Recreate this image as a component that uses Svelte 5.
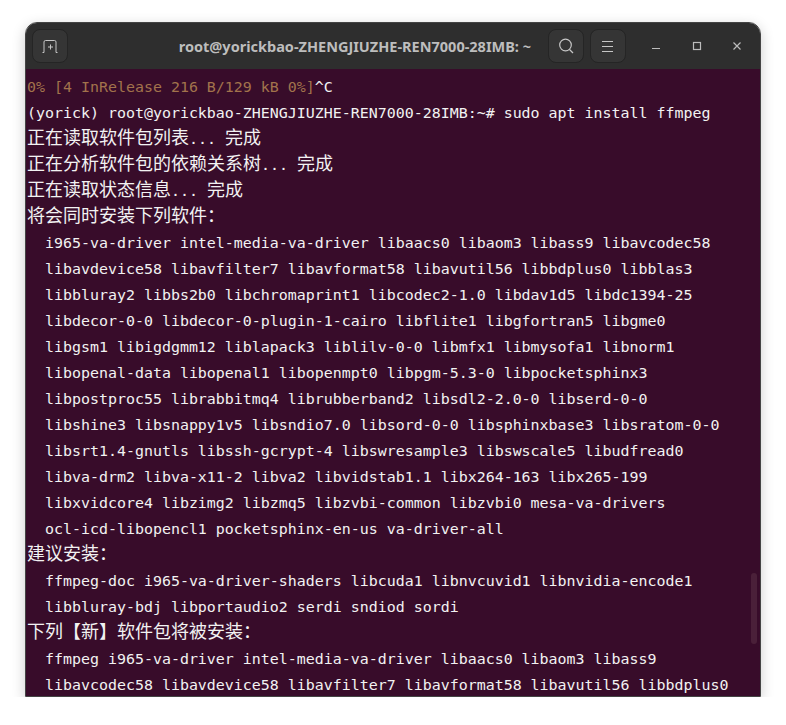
<script>
	const lines = [
		{ text: '0% [4 InRelease 216 B/129 kB 0%]', dim: true, rest: '^C' },
		{ text: '(yorick) root@yorickbao-ZHENGJIUZHE-REN7000-28IMB:~# sudo apt install ffmpeg' },
		{ text: '正在读取软件包列表... 完成' },
		{ text: '正在分析软件包的依赖关系树... 完成' },
		{ text: '正在读取状态信息... 完成' },
		{ text: '将会同时安装下列软件：' },
		{ text: '  i965-va-driver intel-media-va-driver libaacs0 libaom3 libass9 libavcodec58' },
		{ text: '  libavdevice58 libavfilter7 libavformat58 libavutil56 libbdplus0 libblas3' },
		{ text: '  libbluray2 libbs2b0 libchromaprint1 libcodec2-1.0 libdav1d5 libdc1394-25' },
		{ text: '  libdecor-0-0 libdecor-0-plugin-1-cairo libflite1 libgfortran5 libgme0' },
		{ text: '  libgsm1 libigdgmm12 liblapack3 liblilv-0-0 libmfx1 libmysofa1 libnorm1' },
		{ text: '  libopenal-data libopenal1 libopenmpt0 libpgm-5.3-0 libpocketsphinx3' },
		{ text: '  libpostproc55 librabbitmq4 librubberband2 libsdl2-2.0-0 libserd-0-0' },
		{ text: '  libshine3 libsnappy1v5 libsndio7.0 libsord-0-0 libsphinxbase3 libsratom-0-0' },
		{ text: '  libsrt1.4-gnutls libssh-gcrypt-4 libswresample3 libswscale5 libudfread0' },
		{ text: '  libva-drm2 libva-x11-2 libva2 libvidstab1.1 libx264-163 libx265-199' },
		{ text: '  libxvidcore4 libzimg2 libzmq5 libzvbi-common libzvbi0 mesa-va-drivers' },
		{ text: '  ocl-icd-libopencl1 pocketsphinx-en-us va-driver-all' },
		{ text: '建议安装：' },
		{ text: '  ffmpeg-doc i965-va-driver-shaders libcuda1 libnvcuvid1 libnvidia-encode1' },
		{ text: '  libbluray-bdj libportaudio2 serdi sndiod sordi' },
		{ text: '下列【新】软件包将被安装：' },
		{ text: '  ffmpeg i965-va-driver intel-media-va-driver libaacs0 libaom3 libass9' },
		{ text: '  libavcodec58 libavdevice58 libavfilter7 libavformat58 libavutil56 libbdplus0' }
	];

	// CJK runs get a bigger font so one glyph covers two terminal cells
	const split = (text) => text.split(/([\u3000-\u9fff\uff00-\uffef]+)/).filter(Boolean);
	const isCjk = (part) => /^[\u3000-\u9fff\uff00-\uffef]/.test(part);
</script>

<div class="window">
	<header class="titlebar">
		<button class="tool" aria-label="New tab">
			<svg width="16" height="16" viewBox="0 0 16 16" fill="none" stroke="currentColor">
				<path d="M.5 14.5h1.5V4q0-1.500 1.500-1.500h9q1.500 0 1.500 1.500v10.500h1.500" />
				<path d="M8.500 6.500v5M6 9h5" />
			</svg>
		</button>
		<div class="title">root@yorickbao-ZHENGJIUZHE-REN7000-28IMB: ~</div>
		<button class="tool" aria-label="Search">
			<svg width="16" height="16" viewBox="0 0 16 16" fill="none" stroke="currentColor" stroke-width="1.200">
				<circle cx="7.500" cy="7" r="5.800" />
				<path d="M11.500 11.500l3.500 3.500" />
			</svg>
		</button>
		<button class="tool" aria-label="Menu">
			<svg width="16" height="16" viewBox="0 0 16 16" fill="none" stroke="currentColor">
				<path d="M2 3.500h11M2 8.500h11M2 13.500h11" />
			</svg>
		</button>
		<div class="controls">
			<span class="control">
				<svg width="12" height="12" viewBox="0 0 12 12" fill="none" stroke="currentColor"><path d="M0 8.500h8" /></svg>
			</span>
			<span class="control">
				<svg width="12" height="12" viewBox="0 0 12 12" fill="none" stroke="currentColor" stroke-width="1.200"><rect x="1.500" y="2.500" width="7" height="7" /></svg>
			</span>
			<span class="control">
				<svg width="12" height="12" viewBox="0 0 12 12" fill="none" stroke="currentColor" stroke-width="1.200"><path d="M1.500 2.500l7 7M8.500 2.500l-7 7" /></svg>
			</span>
		</div>
	</header>

	<main class="terminal">
		{#each lines as line}
			<div class="line">
				<span class:dim={line.dim}>
					{#each split(line.text) as part}
						{#if isCjk(part)}<span class="cjk">{part}</span>{:else}{part}{/if}
					{/each}
				</span>{#if line.rest}{line.rest}{/if}
			</div>
		{/each}
		<div class="scrollbar"></div>
	</main>
</div>

<style>
	:global(body) {
		background: #fff;
	}

	.window {
		box-sizing: border-box;
		width: 736px;
		height: 675px;
		margin: 22px 0 0 25px;
		border: 1px solid #444;
		border-radius: 12px 12px 0 0;
		overflow: hidden;
		display: flex;
		flex-direction: column;
		box-shadow: 0 4px 14px rgba(0, 0, 0, 0.2);
	}

	.titlebar {
		flex: none;
		height: 46px;
		box-sizing: border-box;
		padding: 0 6px;
		display: flex;
		align-items: center;
		gap: 6px;
		background: #2e2e2e;
		color: #c2c2c2;
	}

	.tool {
		width: 36px;
		height: 34px;
		padding: 0;
		display: flex;
		align-items: center;
		justify-content: center;
		background: #353535;
		border: 1px solid #252525;
		border-radius: 8px;
		color: #c6c6c6;
	}

	.title {
		flex: 1;
		padding-right: 11px;
		text-align: right;
		font: bold 14.5px "Noto Sans", sans-serif;
		color: #bdbdbd;
		white-space: nowrap;
	}

	.controls {
		display: flex;
		align-items: center;
		gap: 28px;
		margin-left: 20px;
		padding-right: 10px;
		color: #bcbcbc;
	}

	.control {
		width: 12px;
		height: 12px;
		display: block;
	}

	.control svg {
		display: block;
	}

	.terminal {
		position: relative;
		flex: 1;
		min-height: 0;
		padding: 5px 0 0 1px;
		background: #380c2a;
		color: #f2f2f2;
		font-family: "DejaVu Sans Mono", monospace;
		font-size: 14.95px;
	}

	.line {
		height: 26px;
		line-height: 26px;
		white-space: pre;
	}

	.dim {
		color: #a2734c;
	}

	.cjk {
		font-family: "Noto Sans CJK SC", sans-serif;
		font-size: 18px;
		line-height: 0;
	}

	.scrollbar {
		position: absolute;
		right: 3px;
		top: 504px;
		width: 6px;
		height: 71px;
		border-radius: 3px;
		background: #4a2039;
	}
</style>
